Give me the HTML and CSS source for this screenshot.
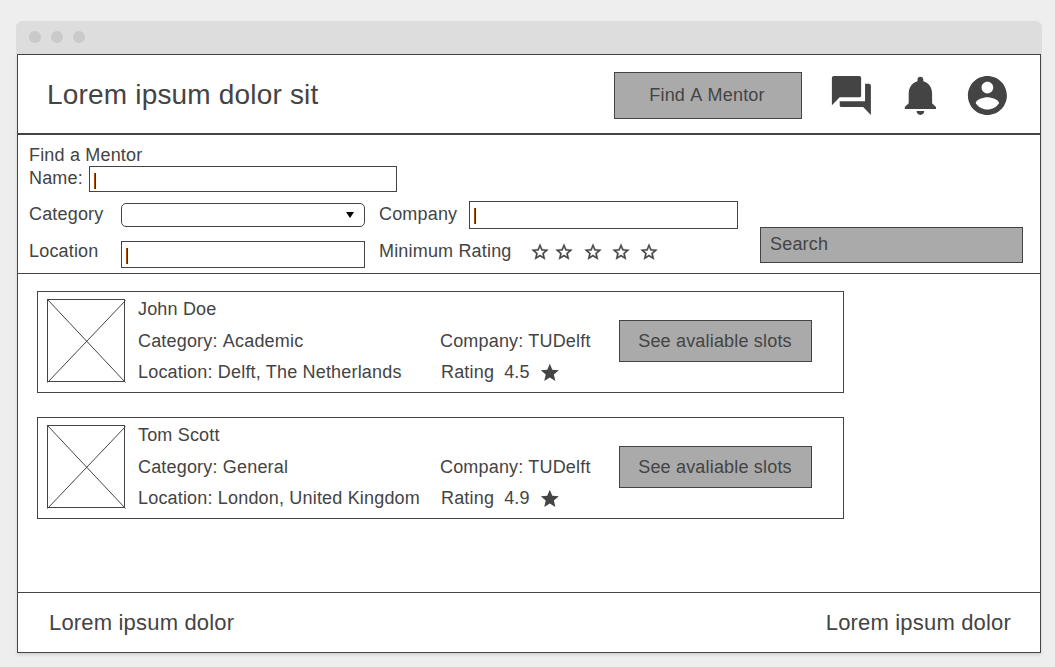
FILE: index.html
```html
<!DOCTYPE html>
<html lang="en">
<head>
<meta charset="utf-8">
<title>Find a Mentor</title>
<link rel="stylesheet" href="styles.css">
</head>
<body>
<svg class="defs" width="0" height="0">
  <symbol id="forum" viewBox="0 0 24 24"><path d="M21 6h-2v9H6v2c0 .55.45 1 1 1h11l4 4V7c0-.55-.45-1-1-1zm-4 6V3c0-.55-.45-1-1-1H3c-.55 0-1 .45-1 1v14l4-4h10c.55 0 1-.45 1-1z"/></symbol>
  <symbol id="bell" viewBox="0 0 24 24"><path d="M12 22c1.1 0 2-.9 2-2h-4c0 1.1.89 2 2 2zm6-6v-5c0-3.07-1.64-5.64-4.5-6.32V4c0-.83-.67-1.5-1.5-1.5s-1.5.67-1.5 1.5v.68C7.63 5.36 6 7.92 6 11v5l-2 2v1h16v-1l-2-2z"/></symbol>
  <symbol id="account" viewBox="0 0 24 24"><path d="M12 2C6.48 2 2 6.48 2 12s4.48 10 10 10 10-4.480 10-10S17.520 2 12 2zm0 3c1.660 0 3 1.340 3 3s-1.340 3-3 3-3-1.340-3-3 1.340-3 3-3zm0 14.200c-2.500 0-4.710-1.280-6-3.220.03-1.990 4-3.080 6-3.080 1.990 0 5.970 1.090 6 3.080-1.290 1.940-3.500 3.220-6 3.220z"/></symbol>
  <symbol id="star" viewBox="0 0 24 24"><path d="M12 17.270L18.180 21l-1.640-7.030L22 9.240l-7.190-.61L12 2 9.190 8.630 2 9.240l5.460 4.730L5.820 21z"/></symbol>
  <symbol id="star-outline" viewBox="0 0 24 24"><path d="M22 9.240l-7.190-.62L12 2 9.190 8.630 2 9.240l5.460 4.730L5.820 21 12 17.270 18.180 21l-1.630-7.030L22 9.240zM12 15.400l-3.760 2.270 1-4.280-3.320-2.880 4.380-.38L12 6.100l1.710 4.040 4.380.38-3.320 2.880 1 4.280L12 15.400z"/></symbol>
</svg>
<div class="window">
  <div class="titlebar"><i class="dot"></i><i class="dot"></i><i class="dot"></i></div>
  <div class="screen">
    <header class="header">
      <h1 class="brand">Lorem ipsum dolor sit</h1>
      <div class="button find">Find A Mentor</div>
      <svg class="icon forum"><use href="#forum"/></svg>
      <svg class="icon bell"><use href="#bell"/></svg>
      <svg class="icon account"><use href="#account"/></svg>
    </header>
    <section class="filters">
      <div class="fields">
        <div class="heading">Find a Mentor</div>
        <div class="row name-row"><span class="name-label">Name:</span><div class="input name"><i class="caret"></i></div></div>
        <div class="row second-row">
          <span class="label">Category</span>
          <div class="select"><svg class="arrow" viewBox="0 0 8 6"><path d="M0 0h8L4 6z"/></svg></div>
          <span class="company-label">Company</span>
          <div class="input company"><i class="caret"></i></div>
        </div>
        <div class="row third-row">
          <span class="label">Location</span>
          <div class="input location"><i class="caret"></i></div>
          <span class="rating-label">Minimum Rating</span>
          <div class="stars">
            <svg class="outline"><use href="#star-outline"/></svg>
            <svg class="outline"><use href="#star-outline"/></svg>
            <svg class="outline spaced"><use href="#star-outline"/></svg>
            <svg class="outline"><use href="#star-outline"/></svg>
            <svg class="outline"><use href="#star-outline"/></svg>
          </div>
        </div>
      </div>
      <div class="button search">Search</div>
    </section>
    <main class="results">
      <article class="card">
        <svg class="photo" viewBox="0 0 80 85"><rect x=".5" y=".5" width="77" height="82"/><path d="M.5.500L78.500 83.500M78.500 1.500L.5 83.500"/></svg>
        <div class="about"><div>John Doe</div><div class="category unkerned">Category: Academic</div><div>Location: Delft, The Netherlands</div></div>
        <div class="work"><div>Company: TUDelft</div><div class="rating"><span>Rating</span><span class="score">4.5</span><svg class="star"><use href="#star"/></svg></div></div>
        <div class="button slots">See avaliable slots</div>
      </article>
      <article class="card">
        <svg class="photo" viewBox="0 0 80 85"><rect x=".5" y=".5" width="77" height="82"/><path d="M.5.500L78.500 83.500M78.500 1.500L.5 83.500"/></svg>
        <div class="about"><div>Tom Scott</div><div class="category">Category: General</div><div>Location: London, United Kingdom</div></div>
        <div class="work"><div>Company: TUDelft</div><div class="rating"><span>Rating</span><span class="score">4.9</span><svg class="star"><use href="#star"/></svg></div></div>
        <div class="button slots">See avaliable slots</div>
      </article>
    </main>
    <footer class="footer"><span>Lorem ipsum dolor</span><span class="right">Lorem ipsum dolor</span></footer>
  </div>
</div>
</body>
</html>
```
FILE: styles.css
```css
* { box-sizing: border-box; }
body {
  margin: 0;
  height: 667px;
  padding: 21px 13px 0 16px;
  overflow: hidden;
  background: #eee;
  color: #444;
  font: 18px/20px "Liberation Sans", Arial, sans-serif;
  letter-spacing: .18px;
  white-space: nowrap;
}
svg { display: block; flex: none; fill: #444; }
.defs { position: absolute; }
.window { width: 1026px; }
.titlebar {
  display: flex;
  gap: 10px;
  height: 33px;
  padding: 10px 13px;
  border-radius: 6px 6px 0 0;
  background: #ddd;
}
.dot { width: 12px; height: 12px; border-radius: 50%; background: #cacaca; }
.screen {
  display: flex;
  flex-direction: column;
  width: 1024px;
  height: 599px;
  margin-left: 1px;
  border: 1px solid #444;
  background: #fff;
  box-shadow: 0 2px 3px rgba(0, 0, 0, .12);
}
.header {
  display: flex;
  align-items: flex-start;
  height: 80px;
  padding-left: 29px;
  border-bottom: 2px solid #444;
}
.brand { flex: none; width: 567px; margin: 24px 0 0; font-size: 28px; font-weight: 400; line-height: 32px; }
.button {
  display: flex;
  align-items: center;
  justify-content: center;
  flex: none;
  border: 1px solid #444;
  background: #aaa;
}
.unkerned, .find { font-kerning: none; }
.find { width: 188px; height: 47px; margin-top: 17px; padding: 0 2px 2px 0; }
.icon { width: 46.8px; height: 46.8px; margin-top: 17.1px; }
.forum { margin-left: 26.1px; }
.bell { margin-left: 22.2px; }
.account { margin-left: 20.2px; }
.filters { display: flex; height: 139px; padding: 10px 0 0 11px; border-bottom: 1px solid #444; }
.fields { width: 731px; }
.heading { height: 21px; }
.row { display: flex; }
.name-row { height: 35px; }
.name-label { width: 60px; margin-top: 2px; }
.second-row { height: 40px; }
.label { width: 92px; margin-top: 3px; }
.input { padding: 6px 0 0 4px; border: 1px solid #444; }
.caret { display: block; width: 2px; height: 16px; border-left: 1px solid #a64b00; border-right: 1px solid #00387a; }
.name { width: 308px; height: 26px; }
.select { display: flex; justify-content: flex-end; width: 244px; height: 24px; margin-top: 2px; padding: 8px 10px 0 0; border: 1px solid #444; border-radius: 5px; }
.arrow { width: 8px; height: 6px; fill: #000; }
.company-label { width: 90px; margin: 3px 0 0 14px; }
.company { width: 269px; height: 28px; }
.third-row .label { margin-top: 0; }
.location { width: 244px; height: 27px; }
.rating-label { width: 151px; margin-left: 14px; }
.stars { display: flex; gap: 8px; margin-top: 1px; }
.outline { width: 20px; height: 20px; stroke: #444; stroke-width: .4; }
.outline:first-child { margin-right: -4px; }
.spaced { margin-left: 1px; }
.search { justify-content: flex-start; width: 263px; height: 36px; margin-top: 82px; padding: 0 0 2px 9px; }
.results { flex: 1; padding: 17px 0 0 19px; }
.card { display: flex; width: 807px; height: 102px; margin-bottom: 24px; padding: 7px 0 0 9px; border: 1px solid #444; }
.photo { width: 80px; height: 85px; fill: none; stroke: #444; stroke-width: 1; }
.about { width: 302px; margin-left: 11px; }
.category { margin: 12px 0 11px; }
.work { width: 179px; padding-top: 32px; }
.rating { display: flex; margin: 11px 0 0 1px; }
.score { margin-left: 10px; }
.star { width: 21.6px; height: 21.6px; margin: .2px 0 0 9.4px; }
.slots { width: 193px; height: 42px; margin-top: 21px; padding-right: 1px; }
.footer {
  display: flex;
  justify-content: space-between;
  height: 60px;
  padding: 17px 29px 0 31px;
  border-top: 1px solid #444;
  font-size: 22px;
  line-height: 26px;
}
```
